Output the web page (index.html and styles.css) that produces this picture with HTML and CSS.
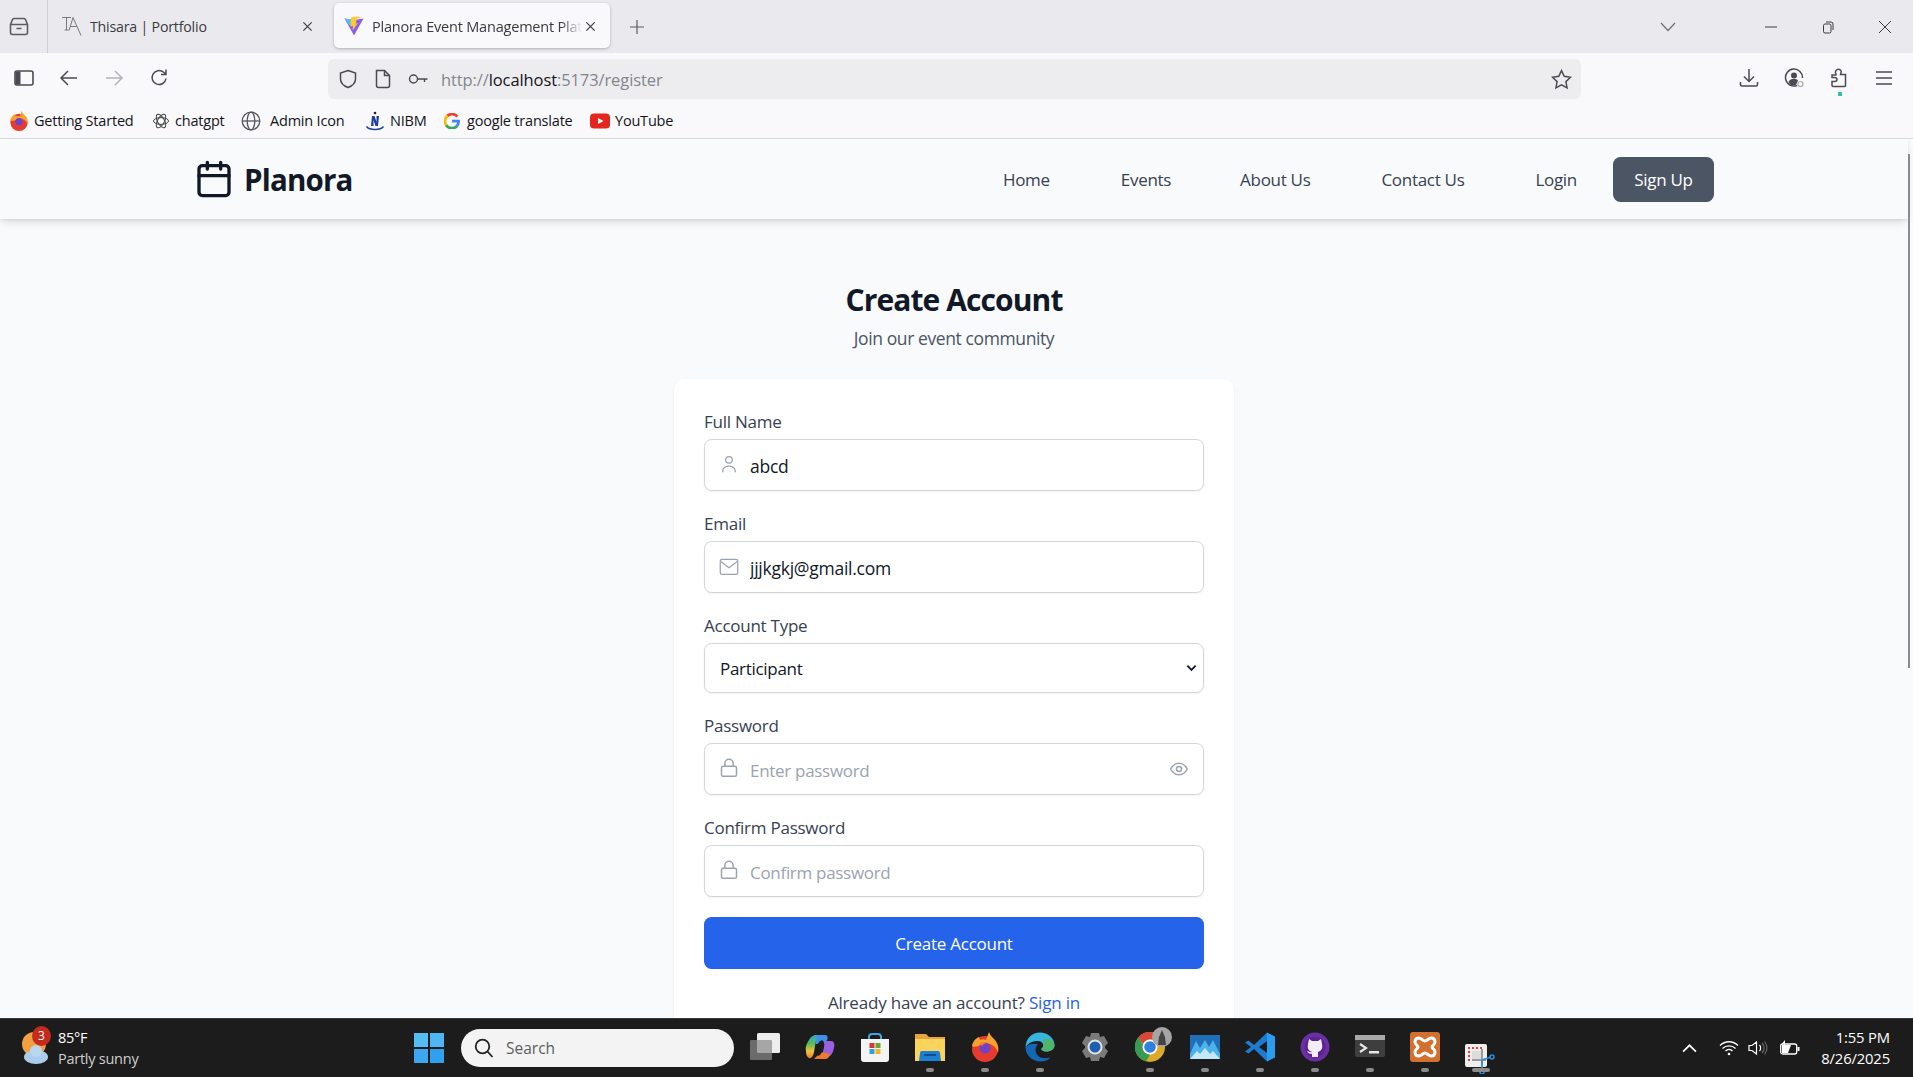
FILE: index.html
```html
<!DOCTYPE html>
<html lang="en">
<head>
<meta charset="utf-8">
<title>Planora Event Management Platform</title>
<link rel="stylesheet" href="styles.css">
</head>
<body>
<div class="window">
  <div class="tabstrip">
    <div class="tabs-toggle">
      <svg class="ico20" viewBox="0 0 20 20" fill="none" stroke="#5b5b66" stroke-width="1.600" stroke-linejoin="round"><path d="M1.500 8.500L3.500 3.500a2 2 0 0 1 1.500-1h10a2 2 0 0 1 1.500 1l2 5v8a2 2 0 0 1-2 2h-13a2 2 0 0 1-2-2zM1.500 8.500h17M7.500 12.500h5"/></svg>
    </div>
    <div class="tab">
      <svg class="ico20" viewBox="0 0 20 20" fill="none" stroke="#77777d" stroke-width="1"><path d="M0 1.500h9M4.500 1.500V14M2.500 14h4M11 1.500l-4 13M11 1.500l8 18M8.500 10.500h6"/></svg>
      <span class="tab-title">Thisara | Portfolio</span>
      <svg class="tab-x" viewBox="0 0 12 12" stroke="#3a3a42" stroke-width="1.300"><path d="M1.500 1.500l9 9M10.500 1.500l-9 9"/></svg>
    </div>
    <div class="tab tab-active">
      <svg class="ico20" viewBox="0 0 20 20"><path d="M0.500 2.500L10 19.500 19.500 2.500 10 4z" fill="#8a5cf0"/><path d="M0.500 2.500l6.500 1 .5 5.500-2 .5z" fill="#4fc3f7"/><path d="M12.500 0.500L7 1.500l-.5 9 2.500-.5-.5 4.500 5.500-7.500-2.500.5 2-5.500 4 .5-3-2z" fill="#fdc92f"/></svg>
      <span class="tab-title tab-fade">Planora Event Management Plat</span>
      <svg class="tab-x" viewBox="0 0 12 12" stroke="#3a3a42" stroke-width="1.300"><path d="M1.500 1.500l9 9M10.500 1.500l-9 9"/></svg>
    </div>
    <svg class="tab-plus" viewBox="0 0 16 16" stroke="#5b5b66" stroke-width="1.200"><path d="M8 1v14M1 8h14"/></svg>
    <div class="strip-space"></div>
    <svg class="tab-list" viewBox="0 0 16 10" fill="none" stroke="#6d6d75" stroke-width="1.200"><path d="M1 1l7 7.500L15 1"/></svg>
    <div class="winbtns">
      <svg viewBox="0 0 14 14" fill="none" stroke="#3a3a42" stroke-width="1"><path d="M1 7h12"/></svg>
      <svg viewBox="0 0 14 14" fill="none" stroke="#3a3a42" stroke-width="1"><rect x="2.500" y="4" width="7.500" height="9" rx="1.500"/><path d="M5 2h5a2 2 0 0 1 2 2v6"/></svg>
      <svg viewBox="0 0 14 14" fill="none" stroke="#3a3a42" stroke-width="1"><path d="M1 1l12 12M13 1L1 13"/></svg>
    </div>
  </div>

  <div class="toolbar">
    <div class="nav-tools">
      <svg class="ico20" viewBox="0 0 20 20" fill="none" stroke="#4a4a52" stroke-width="1.600"><rect x="1" y="3" width="18" height="14" rx="2"/><rect x="1.500" y="3.500" width="5" height="13" fill="#4a4a52" stroke="none"/></svg>
      <svg class="ico20" viewBox="0 0 20 20" fill="none" stroke="#4a4a52" stroke-width="1.500"><path d="M18 10H2M9 3l-7 7 7 7"/></svg>
      <svg class="ico20" viewBox="0 0 20 20" fill="none" stroke="#b3b3b8" stroke-width="1.500"><path d="M2 10h16M11 3l7 7-7 7"/></svg>
      <svg class="ico20" viewBox="0 0 20 20" fill="none" stroke="#4a4a52" stroke-width="1.500"><path d="M17 10.500a7 7 0 1 1-2.300-6.200L17 6.500M17 1.500v5h-5"/></svg>
    </div>
    <div class="urlbar">
      <svg class="ico20" viewBox="0 0 20 20" fill="none" stroke="#4a4a52" stroke-width="1.500"><path d="M10 1.500l7.500 2.500v6c0 4-3.500 7-7.500 8.500-4-1.500-7.500-4.500-7.500-8.500V4z"/></svg>
      <svg class="ico20" viewBox="0 0 20 20" fill="none" stroke="#4a4a52" stroke-width="1.500"><path d="M3.500 1.500h8l5 5v10a2 2 0 0 1-2 2h-9a2 2 0 0 1-2-2z"/><path d="M11.500 1.500v5h5"/></svg>
      <svg class="ico20" viewBox="0 0 20 20" fill="none" stroke="#4a4a52" stroke-width="1.400"><circle cx="5.500" cy="10" r="4"/><path d="M9.500 10h10M16.500 10v3"/></svg>
      <span class="url"><span class="url-dim">http://</span>localhost<span class="url-dim">:5173/register</span></span>
      <svg class="star" viewBox="0 0 20 20" fill="none" stroke="#4a4a52" stroke-width="1.400"><path d="M10 1.500l2.600 5.500 6 .8-4.400 4.200 1.100 6L10 15.100 4.700 18l1.100-6L1.400 7.800l6-.8z"/></svg>
    </div>
    <div class="right-tools">
      <svg class="ico20" viewBox="0 0 20 20" fill="none" stroke="#4a4a52" stroke-width="1.500"><path d="M10 1v12M5 8.500l5 5 5-5M1.500 14v2.500a1.500 1.500 0 0 0 1.500 1.500h14a1.500 1.500 0 0 0 1.500-1.500V14"/></svg>
      <svg class="ico20" viewBox="0 0 20 20" fill="none"><path d="M13 17.500A8.500 8.500 0 1 1 18.500 10" stroke="#4a4a52" stroke-width="1.500"/><circle cx="10" cy="7.500" r="3" fill="#4a4a52"/><path d="M4.500 14c1-2.500 3-3 5.500-3s3.500.5 4 1.500L12 17H7z" fill="#4a4a52"/><circle cx="16.500" cy="16" r="2.500" stroke="#a8a8ae" stroke-width="1.200"/></svg>
      <span class="ext">
        <svg class="ico20" viewBox="0 0 20 20" fill="none" stroke="#4a4a52" stroke-width="1.500"><path d="M3 7h4c.5-1-1-2-.5-3.500C7 2 9 1 10.500 1.500c1.500.5 2 2 1.500 3l-.5 2h5v11a1 1 0 0 1-1 1H4a1 1 0 0 1-1-1v-4h2.500c1.500 0 2.500-1 2.500-2s-1-2-2.500-2H3z"/></svg>
        <i class="ext-dot"></i>
      </span>
      <svg class="ico20" viewBox="0 0 20 20" fill="none" stroke="#4a4a52" stroke-width="1.500"><path d="M2 4h16M2 10h16M2 16h16"/></svg>
    </div>
  </div>

  <div class="bookmarks">
    <a class="bm bm-ff">
      <svg class="ico20" viewBox="0 0 30 30"><circle cx="15" cy="17" r="13" fill="#e63b2e"/><path d="M2 14C3 9 6 6 9 5l1 3c2-1 4-1 6 0 1-3 2-5 3-8 1 3 3 5 5 7 4 4 5 9 4 14-1-5-5-8-8-9-3-1-6 0-9 1-3 1-7 3-9 1z" fill="#f9a12e"/><circle cx="15" cy="16" r="5.500" fill="#7142c9"/></svg>
      <span>Getting Started</span>
    </a>
    <a class="bm bm-gpt">
      <svg class="ico18" viewBox="0 0 18 18" fill="none" stroke="#444" stroke-width="1"><ellipse cx="9" cy="9" rx="7.500" ry="3.400"/><ellipse cx="9" cy="9" rx="7.500" ry="3.400" transform="rotate(60 9 9)"/><ellipse cx="9" cy="9" rx="7.500" ry="3.400" transform="rotate(120 9 9)"/></svg>
      <span>chatgpt</span>
    </a>
    <a class="bm bm-globe">
      <svg class="ico20" viewBox="0 0 20 20" fill="none" stroke="#55555c" stroke-width="1.300"><circle cx="10" cy="10" r="8.800"/><ellipse cx="10" cy="10" rx="3.800" ry="8.800"/><path d="M1.500 10h17"/></svg>
      <span>Admin Icon</span>
    </a>
    <a class="bm bm-nibm">
      <svg class="ico20" viewBox="0 0 20 20" fill="none"><path d="M1.500 15.500c3 4 14 4 17 0" stroke="#1f3f9c" stroke-width="1.500"/><circle cx="10" cy="2" r="1.300" fill="#222"/><path d="M6 15l1-10h2.500l2 6V5H14l-1 10h-2.500l-2-6v6z" fill="#1f3f9c"/></svg>
      <span>NIBM</span>
    </a>
    <a class="bm bm-g">
      <svg class="ico16" viewBox="0 0 16 16" fill="none" stroke-width="2.800"><path d="M13.400 3.700A7 7 0 0 0 3 3.200" stroke="#ea4335"/><path d="M3.600 2.700a7 7 0 0 0-1 10" stroke="#fbbc05"/><path d="M2.200 12.200a7 7 0 0 0 10.600 1" stroke="#34a853"/><path d="M12.400 13.500c1.600-1.400 2.300-3 2.100-5.300H8" stroke="#4285f4"/></svg>
      <span>google translate</span>
    </a>
    <a class="bm">
      <svg class="ico20" viewBox="0 0 20 20"><rect y="2.500" width="20" height="15" rx="4" fill="#e5261f"/><path d="M8 7l5.500 3L8 13z" fill="#fff"/></svg>
      <span>YouTube</span>
    </a>
  </div>

  <div class="viewport">
    <header class="site-nav">
      <div class="brand">
        <svg class="brand-icon" viewBox="0 0 24 24" fill="none" stroke="#111827" stroke-width="2" stroke-linecap="round" stroke-linejoin="round"><rect x="3" y="4" width="18" height="18" rx="2"/><path d="M16 2v4M8 2v4M3 10h18"/></svg>
        <span class="brand-name">Planora</span>
      </div>
      <nav class="links">
        <a class="link link-home">Home</a>
        <a class="link link-events">Events</a>
        <a class="link link-about">About Us</a>
        <a class="link link-contact">Contact Us</a>
        <a class="link link-login">Login</a>
        <a class="signup">Sign Up</a>
      </nav>
    </header>

    <main class="page">
      <h1 class="title">Create Account</h1>
      <p class="subtitle">Join our event community</p>
      <form class="card">
        <label class="field">
          <span class="label">Full Name</span>
          <span class="control">
            <svg class="field-icon" viewBox="0 0 24 24" fill="none" stroke="#9ca3af" stroke-width="1.500"><circle cx="12" cy="7" r="4"/><path d="M4.500 22v-2a7.500 5.500 0 0 1 15 0v2"/></svg>
            <input class="input" type="text" value="abcd">
          </span>
        </label>
        <label class="field">
          <span class="label">Email</span>
          <span class="control">
            <svg class="field-icon" viewBox="0 0 24 24" fill="none" stroke="#9ca3af" stroke-width="1.500"><rect x="1.500" y="4" width="21" height="18" rx="2"/><path d="M2 6.500L12 14l10-7.500"/></svg>
            <input class="input" type="email" value="jjjkgkj@gmail.com">
          </span>
        </label>
        <label class="field">
          <span class="label">Account Type</span>
          <span class="control">
            <select class="select"><option>Participant</option><option>Organizer</option></select>
            <svg class="select-arrow" viewBox="0 0 12 8" fill="none" stroke="#111827" stroke-width="2"><path d="M1.500 1.500L6 6l4.500-4.500"/></svg>
          </span>
        </label>
        <label class="field">
          <span class="label">Password</span>
          <span class="control">
            <svg class="field-icon" viewBox="0 0 24 24" fill="none" stroke="#9ca3af" stroke-width="1.800"><rect x="3" y="10" width="18" height="12" rx="2"/><path d="M7 10V6.500a5 5 0 0 1 10 0V10"/></svg>
            <input class="input" type="password" placeholder="Enter password">
            <svg class="eye" viewBox="0 0 24 24" fill="none" stroke="#9ca3af" stroke-width="1.800"><path d="M2 12s3.500-7 10-7 10 7 10 7-3.500 7-10 7-10-7-10-7z"/><circle cx="12" cy="12" r="3"/></svg>
          </span>
        </label>
        <label class="field">
          <span class="label">Confirm Password</span>
          <span class="control">
            <svg class="field-icon" viewBox="0 0 24 24" fill="none" stroke="#9ca3af" stroke-width="1.800"><rect x="3" y="10" width="18" height="12" rx="2"/><path d="M7 10V6.500a5 5 0 0 1 10 0V10"/></svg>
            <input class="input" type="password" placeholder="Confirm password">
          </span>
        </label>
        <button class="submit" type="button">Create Account</button>
        <p class="switch">Already have an account? <a class="signin">Sign in</a></p>
      </form>
    </main>
    <div class="scroll-thumb"></div>
  </div>

  <footer class="taskbar">
    <div class="weather">
      <span class="weather-icon">
        <svg viewBox="0 0 28 36" class="weather-svg"><circle cx="13" cy="15" r="12" fill="#f0a040"/><ellipse cx="15" cy="28" rx="12" ry="7" fill="#a9cdea"/><circle cx="15" cy="22" r="6" fill="#b9d8ef"/></svg>
        <i class="badge">3</i>
      </span>
      <span class="weather-text"><span class="temp">85°F</span><span class="cond">Partly sunny</span></span>
    </div>
    <div class="task-center">
      <svg class="win" viewBox="0 0 30 30"><rect width="14" height="14" fill="#56bdf4"/><rect x="16" width="14" height="14" fill="#4fb6f5"/><rect y="16" width="14" height="14" fill="#3ba7f0"/><rect x="16" y="16" width="14" height="14" fill="#2f9ff0"/></svg>
      <div class="search">
        <svg class="ico20" viewBox="0 0 20 20" fill="none" stroke="#222" stroke-width="1.800"><circle cx="8.500" cy="8.500" r="6.800"/><path d="M13.500 13.500l5 5.500"/></svg>
        <span>Search</span>
      </div>
      <div class="apps">
        <span class="app"><svg viewBox="0 0 30 30"><rect x="7" y="1" width="23" height="20" rx="1.500" fill="#eeeeee"/><rect y="8" width="22" height="20" rx="1" fill="#8a8a8a" fill-opacity=".72"/></svg></span>
        <span class="app"><svg viewBox="0 0 30 30"><defs><linearGradient id="rb" x1="0" y1="0" x2="0" y2="1"><stop offset="0" stop-color="#2aa7c9"/><stop offset=".4" stop-color="#5fbf55"/><stop offset=".7" stop-color="#f2c23a"/><stop offset="1" stop-color="#ee7a30"/></linearGradient></defs><path d="M9 3h11c3 0 3 3 2 5l-2 4H11z" fill="#3f8fe8"/><path d="M20 9h6c3 0 4 3 3 7-1 5-3 8-6 9h-6z" fill="#9b5fe0"/><path d="M1 19c-1-4 1-8 3-11 2-4 5-5 8-5l-3 17c-1 5-3 7-5 6s-3-3-3-7z" fill="url(#rb)"/><path d="M9 27h11c3 0 4-2 5-5l-9-2z" fill="#ee7a30"/><ellipse cx="15" cy="16" rx="3.500" ry="8" transform="rotate(18 15 16)" fill="#1c1c1c"/></svg></span>
        <span class="app"><svg viewBox="0 0 30 30"><path d="M9 9V5a3 3 0 0 1 3-3h6a3 3 0 0 1 3 3v4" fill="none" stroke="#3ea7e8" stroke-width="2"/><path d="M1 7h28v20a3 3 0 0 1-3 3H4a3 3 0 0 1-3-3z" fill="#f4f4f4"/><rect x="9.500" y="11" width="5" height="5" fill="#d9392a"/><rect x="15.500" y="11" width="5" height="5" fill="#66a833"/><rect x="9.500" y="17" width="5" height="5" fill="#2f9fe8"/><rect x="15.500" y="17" width="5" height="5" fill="#f5b81c"/></svg></span>
        <span class="app app-on"><svg viewBox="0 0 30 30"><path d="M0 2h11l3 3h16v24H0z" fill="#e9a53b"/><rect y="7" width="30" height="22" fill="#fbd45e"/><path d="M5 21a2 2 0 0 1 2-2h16a2 2 0 0 1 2 2l1 8H4z" fill="#1d7fd1"/><rect x="9" y="22" width="12" height="2" fill="#0f4f8f"/></svg></span>
        <span class="app app-on"><svg viewBox="0 0 30 30"><circle cx="15" cy="17" r="13" fill="#e63b2e"/><path d="M2 14C3 9 6 6 9 5l1 3c2-1 4-1 6 0 1-3 2-5 3-8 1 3 3 5 5 7 4 4 5 9 4 14-1-5-5-8-8-9-3-1-6 0-9 1-3 1-7 3-9 1z" fill="#f9a12e"/><circle cx="15" cy="16" r="5.500" fill="#7142c9"/><path d="M9 12c2-2 6-3 9-1-3 0-5 1-6 3z" fill="#f47d2e"/></svg></span>
        <span class="app app-on"><svg viewBox="0 0 30 30"><path d="M0.500 15C1 6 7 .5 15 .5c8 0 14.500 6 14.500 12.500 0 4-3.500 6.500-8 6.500-3 0-5-1-5.500-2.500 2-1.500 2.500-3 2-5-1-2.500-3.500-3.500-6.500-3C6 9.500 3 12 .5 15z" fill="#37b4e0"/><path d="M18 7.500c5-2 11.500 1 11.500 6 0 3.500-3.500 6-8 6-2.500 0-4.500-.5-5-2.500 2-1.500 3-3.500 1.500-9.500z" fill="#4fb56a"/><path d="M.5 15c0 8 6.500 14.500 15 14.500 4 0 8-1.500 10-4-5 1.500-11 1-13.500-3-2.500-4-1.500-8 1-10.500C8 11 3 12 .5 15z" fill="#1467b5"/></svg></span>
        <span class="app"><svg viewBox="0 0 30 30"><path d="M11 1h8l1 4 4-1 4 7-3 3v2l3 3-4 7-4-1-1 4h-8l-1-4-4 1-4-7 3-3v-2L2 11l4-7 4 1z" fill="#7a7a7a"/><circle cx="15" cy="15" r="7.500" fill="#dfe3e8"/><circle cx="15" cy="15" r="5.500" fill="#1f5fb0"/></svg></span>
        <span class="app app-on"><svg viewBox="0 0 30 30"><circle cx="15" cy="15" r="15" fill="#dca92a"/><path d="M15 0a15 15 0 0 1 13 7.500H15A7.500 7.500 0 0 0 8 12L3.500 5A15 15 0 0 1 15 0z" fill="#d9473a"/><path d="M3.500 5L11 18l4 4.500-4 7A15 15 0 0 1 3.500 5z" fill="#3a9a52"/><circle cx="15" cy="15" r="7.500" fill="#fff"/><circle cx="15" cy="15" r="5.800" fill="#2f7fdc"/></svg><svg class="chrome-badge" viewBox="0 0 20 20"><circle cx="10" cy="10" r="10" fill="#a5a5a5"/><path d="M10 3l3 7 1 8H6l1-8z" fill="#444"/></svg></span>
        <span class="app app-on"><svg viewBox="0 0 30 30"><rect y="3" width="30" height="24" fill="#1f70b8"/><path d="M0 22l6-13 4 7 5-8 4 7 4-7 7 14v5H0z" fill="#4bb2ea"/><path d="M0 27l7-8 3 3 5-6 5 6 3-3 7 8z" fill="#c4e8f8"/></svg></span>
        <span class="app app-on"><svg viewBox="0 0 30 30"><path d="M22 .5l8 4v21l-8 4z" fill="#2a9df0"/><path d="M22 .5L9 13 3.500 8.500 0 10.500 6 15l-6 4.500 3.500 2L9 17l13 12.500V21l-8-6 8-6z" fill="#1e7cd0"/></svg></span>
        <span class="app app-on"><svg viewBox="0 0 30 30"><circle cx="15" cy="15" r="14.500" fill="#6a2ea5"/><circle cx="15" cy="15" r="10.500" fill="#5a2590"/><path d="M9 7l3 2h6l3-2 1 5c1 5-1 7-4 8v5h-6v-3c-3 0-4-1-5-3 2 0 3 2 5 1v-0c-3-1-5-3-4-8z" fill="#f3ecf9"/></svg></span>
        <span class="app app-on"><svg viewBox="0 0 30 30"><rect y="3" width="30" height="22" rx="2" fill="#3e3e3e"/><rect y="3" width="30" height="5" fill="#a9a9a9"/><path d="M5 12l6 4-6 4" fill="none" stroke="#e6e6e6" stroke-width="2.200"/><rect x="14" y="19" width="10" height="2.500" fill="#e6e6e6"/></svg></span>
        <span class="app app-on"><svg viewBox="0 0 30 30"><rect width="30" height="30" rx="3" fill="#d2712f"/><path d="M9 6c2 0 4 3 6 3s4-3 6-3c3 0 4 2 4 4 0 3-3 3-3 5s3 2 3 5c0 2-1 4-4 4-2 0-4-3-6-3s-4 3-6 3c-3 0-4-2-4-4 0-3 3-3 3-5s-3-2-3-5c0-2 1-4 4-4z" fill="none" stroke="#fff" stroke-width="3"/></svg></span>
        <span class="app app-on app-snip"><svg viewBox="0 0 30 30"><rect width="22" height="23" rx="2" fill="#efefef"/><path d="M4 17V4h13" fill="none" stroke="#d9473a" stroke-width="2" stroke-dasharray="2 2"/><path d="M7 7h10v10H7z" fill="#dcdcdc"/><path d="M17 5v15M7 16h14" stroke="#9a9a9a" stroke-width="2"/><path d="M17 16l9-3M17 16l0 10" stroke="#2a8ae0" stroke-width="1.800" fill="none"/><circle cx="27" cy="13" r="2" fill="none" stroke="#2a8ae0" stroke-width="1.500"/><circle cx="17" cy="28" r="2" fill="none" stroke="#2a8ae0" stroke-width="1.500"/></svg></span>
      </div>
    </div>
    <div class="tray">
      <svg class="tray-chev" viewBox="0 0 14 8" fill="none" stroke="#fff" stroke-width="1.600"><path d="M1 7l6-6 6 6"/></svg>
      <svg class="tray-ico tray-wifi" viewBox="0 0 20 16" fill="none" stroke="#fff" stroke-width="1.300"><path d="M1 5.500c5-5 13-5 18 0M3.500 8.500c3.500-3.500 9.500-3.500 13 0M6.500 11c2-2 5-2 7 0"/><circle cx="10" cy="14" r="1.300" fill="#fff" stroke="none"/></svg>
      <svg class="tray-ico tray-vol" viewBox="0 0 20 16" fill="none" stroke="#fff" stroke-width="1.200"><path d="M1 5.500h3L8.500 2v12L4 10.500H1zM11.500 5c1.500 1.500 1.500 4.500 0 6"/><path d="M14 3c2.500 3 2.500 7 0 10M16.500 1.500c3 4 3 9 0 13" stroke="#666"/></svg>
      <svg class="tray-ico tray-bat" viewBox="0 0 20 16"><rect x="0.700" y="4" width="16" height="10" rx="2" fill="none" stroke="#fff" stroke-width="1.300"/><path d="M2 5h9l-3 8H2z" fill="#fff"/><rect x="17.500" y="7" width="2" height="4" fill="#fff"/><path d="M5 0L2 3.500l3 1.500z" fill="#fff"/></svg>
      <div class="clock"><span>1:55 PM</span><span>8/26/2025</span></div>
    </div>
  </footer>
</div>
</body>
</html>
```

FILE: styles.css
```css
* { box-sizing: border-box; }
html, body { margin: 0; height: 100%; overflow: hidden; }
body { font-family: "Open Sans", "Noto Sans", sans-serif; color: #111827; }
svg { display: block; flex: none; }
a { text-decoration: none; color: inherit; }
.ico20 { width: 20px; height: 20px; }
.ico18 { width: 18px; height: 18px; }
.ico16 { width: 16px; height: 16px; }

.window { height: 1077px; display: flex; flex-direction: column; }

/* Browser tab strip */
.tabstrip { height: 53px; background: #eaeaee; display: flex; align-items: center; flex: none; }
.tabs-toggle { width: 48px; height: 53px; border-right: 1px solid #cfcfd4; padding: 16px 0 0 9px; }
.tab { width: 286px; height: 45px; margin-top: -2px; padding: 1px 21px 0 14px; display: flex; align-items: center; color: #3a3a42; font-size: 14.200px; }
.tab-title { margin-left: 8px; flex: 1; white-space: nowrap; letter-spacing: -0.200px; }
.tab-x { width: 11px; height: 11px; }
.tab-active { width: 276px; background: #f9f9fb; border-radius: 5px; box-shadow: 0 1px 3px rgba(0, 0, 0, .25); padding: 1px 15px 0 10px; font-size: 14.500px; }
.tab-active .tab-x { margin-left: 3px; }
.tab-fade { -webkit-mask-image: linear-gradient(90deg, #000 90%, transparent); mask-image: linear-gradient(90deg, #000 90%, transparent); }
.tab-plus { width: 16px; height: 16px; margin-left: 19px; }
.strip-space { flex: 1; }
.tab-list { width: 16px; height: 10px; margin-right: 88px; }
.winbtns { display: flex; gap: 43px; padding-right: 21px; }
.winbtns svg { width: 14px; height: 14px; }

/* Browser toolbar */
.toolbar { height: 47px; background: #f9f9fb; display: flex; align-items: center; flex: none; }
.nav-tools { width: 328px; display: flex; gap: 25px; padding: 2px 0 0 14px; flex: none; }
.urlbar { width: 1253px; height: 40px; margin-top: 5px; background: #ededf0; border-radius: 6px; display: flex; align-items: center; padding: 0 9px 0 10px; }
.urlbar > svg:nth-child(2) { margin-left: 15px; }
.urlbar > svg:nth-child(3) { margin-left: 15px; }
.url { flex: 1; margin-left: 13px; font-size: 16.500px; letter-spacing: -0.100px; color: #15141a; }
.url-dim { color: #85858c; }
.star { width: 21px; height: 21px; }
.right-tools { flex: 1; display: flex; justify-content: flex-end; gap: 25px; padding: 2px 19px 0 0; }
.ext { display: block; position: relative; }
.ext-dot { position: absolute; left: 9px; top: 24px; width: 4px; height: 4px; background: #2ebfa5; }

/* Bookmarks */
.bookmarks { height: 38px; background: #f9f9fb; display: flex; align-items: center; padding: 3px 0 0 9px; font-size: 14.500px; color: #15141a; flex: none; }
.bm { display: flex; align-items: center; gap: 5px; letter-spacing: -0.200px; white-space: nowrap; }
.bm-ff { width: 143px; }
.bm-gpt { width: 89px; }
.bm-globe { width: 124px; gap: 9px; }
.bm-nibm { width: 79px; }
.bm-g { width: 146px; gap: 7px; }

/* Page viewport */
.viewport { flex: 1; min-height: 0; overflow: hidden; background: #f9fafb; border-top: 1px solid #d8d8dc; position: relative; }
.site-nav { height: 80px; width: 1908px; padding: 0 194px; background: #f9fafb; box-shadow: 0 5px 8px -2px rgba(0, 0, 0, .12), 0 1px 3px rgba(0, 0, 0, .08); display: flex; align-items: center; justify-content: space-between; position: relative; }
.brand { display: flex; align-items: center; gap: 10px; }
.brand-icon { width: 40px; height: 40px; }
.brand-name { font-size: 29.500px; font-weight: 700; letter-spacing: -0.800px; }
.links { display: flex; align-items: center; font-size: 17px; color: #374151; letter-spacing: -0.300px; }
.link-home { margin-right: 71px; padding-top: 1px; }
.link-events { margin-right: 69px; padding-top: 1px; }
.link-about { margin-right: 71px; padding-top: 1px; }
.link-contact { margin-right: 71px; padding-top: 1px; }
.link-login { margin-right: 36px; padding-top: 1px; }
.signup { width: 101px; height: 45px; padding-top: 1px; background: #4b5563; color: #fff; border-radius: 7.500px; display: flex; align-items: center; justify-content: center; }

.page { width: 1908px; display: flex; flex-direction: column; align-items: center; padding-top: 62px; }
.title { margin: 0; font-size: 30px; line-height: 38px; font-weight: 700; color: #111827; letter-spacing: -0.900px; }
.subtitle { margin: 7px 0 28px; font-size: 17.500px; line-height: 25px; color: #4b5563; letter-spacing: -0.400px; }
.card { width: 560px; padding: 30px 30px 40px; background: #fff; border-radius: 10px; box-shadow: 0 1px 3px rgba(0, 0, 0, .05); display: flex; flex-direction: column; }
.field { display: block; margin-bottom: 20px; }
.label { display: block; font-size: 17px; line-height: 25px; margin-bottom: 5px; color: #374151; letter-spacing: -0.250px; }
.control { display: block; position: relative; }
.input { width: 100%; height: 52px; border: 1.500px solid #d1d5db; border-radius: 7.500px; padding: 2px 12px 0 45px; font: inherit; font-size: 17.500px; letter-spacing: -0.250px; color: #111827; background: #fff; box-shadow: 0 1px 2px rgba(0, 0, 0, .05); outline: none; }
.input::placeholder { color: #9ca3af; opacity: 1; font-size: 17px; letter-spacing: -0.300px; }
.select { display: block; width: 100%; height: 50px; border: 1.500px solid #d1d5db; border-radius: 7.500px; padding: 1px 12px 0 15px; font: inherit; font-size: 17px; letter-spacing: -0.300px; color: #111827; background: #fff; appearance: none; box-shadow: 0 1px 2px rgba(0, 0, 0, .05); outline: none; }
.field-icon { position: absolute; left: 15px; top: 15px; width: 20px; height: 20px; }
.select-arrow { position: absolute; right: 7px; top: 21px; width: 11px; height: 8px; }
.eye { position: absolute; right: 15px; top: 16px; width: 20px; height: 20px; }
.submit { height: 52px; border: 0; border-radius: 7.500px; background: #2563eb; color: #fff; font: inherit; font-size: 17px; letter-spacing: -0.250px; }
.switch { margin: 21px 0 0; text-align: center; font-size: 17px; line-height: 25px; color: #374151; letter-spacing: -0.180px; }
.signin { color: #2563eb; }
.scroll-thumb { position: absolute; right: 3px; top: 15px; width: 2px; height: 514px; background: #8a8a8f; }

/* Windows taskbar */
.taskbar { height: 59px; flex: none; background: #1c1c1c; border-top: 1px solid #3a3a3a; display: flex; color: #fff; position: relative; }
.weather { width: 414px; display: flex; padding-left: 21px; align-items: center; }
.weather-icon { display: block; position: relative; width: 37px; height: 38px; margin-top: -4px; }
.weather-svg { width: 28px; height: 36px; margin-top: 2px; }
.badge { position: absolute; left: 11px; top: -1px; width: 19px; height: 20px; border-radius: 50%; background: #c42b1c; font-style: normal; font-size: 12px; line-height: 19px; text-align: center; }
.weather-text { display: flex; flex-direction: column; font-size: 14.500px; line-height: 21px; letter-spacing: -0.250px; }
.temp { color: #fff; }
.cond { color: #cfcfcf; }
.task-center { display: flex; align-items: center; flex: none; }
.win { width: 30px; height: 30px; }
.search { width: 273px; height: 38px; margin-left: 17px; background: #f3f3f3; border-radius: 19px; display: flex; align-items: center; gap: 12px; padding-left: 13px; color: #5d5d5d; font-size: 15.500px; }
.apps { display: flex; margin-left: 3px; }
.app { display: block; position: relative; width: 55px; height: 58px; padding: 13px 12px 0 13px; }
.app > svg:first-child { width: 30px; height: 30px; }
.app-on::after { content: ""; position: absolute; left: 24px; bottom: 5px; width: 8px; height: 4px; border-radius: 2px; background: #8a8a8a; }
.app-snip { padding-top: 25px; }
.app-snip::after { left: 20px; width: 18px; }
.chrome-badge { position: absolute; left: 30px; top: 8px; width: 20px; height: 20px; }
.tray { flex: 1; display: flex; align-items: center; justify-content: flex-end; padding-right: 23px; }
.tray-chev { width: 15px; height: 9px; margin-right: 22px; }
.tray-ico { width: 20px; height: 16px; }
.tray-wifi { margin-right: 9px; }
.tray-vol { margin-right: 12px; }
.clock { margin-left: 19px; width: 71px; display: flex; flex-direction: column; align-items: flex-end; font-size: 14.800px; line-height: 21px; letter-spacing: -0.150px; white-space: nowrap; }
```
